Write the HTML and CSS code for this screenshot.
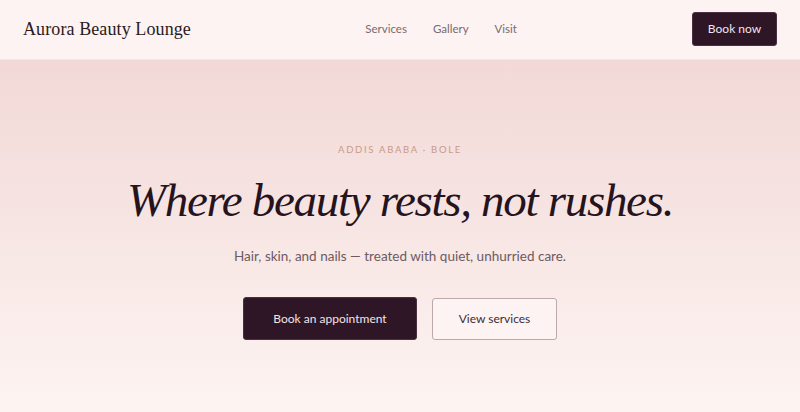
FILE: index.html
```html
<!DOCTYPE html>
<html lang="en">
<head>
<meta charset="utf-8">
<title>Aurora Beauty Lounge</title>
<link rel="stylesheet" href="styles.css">
</head>
<body>
<header class="site-header">
  <a class="logo" href="#">Aurora Beauty Lounge</a>
  <nav class="nav">
    <a href="#">Services</a>
    <a href="#">Gallery</a>
    <a href="#">Visit</a>
  </nav>
  <a class="btn btn-dark btn-small" href="#">Book now</a>
</header>
<main class="hero">
  <p class="eyebrow">Addis Ababa · Bole</p>
  <h1 class="title">Where beauty rests, not rushes.</h1>
  <p class="lead">Hair, skin, and nails — treated with quiet, unhurried care.</p>
  <div class="actions">
    <a class="btn btn-dark btn-large" href="#">Book an appointment</a>
    <a class="btn btn-outline btn-large" href="#">View services</a>
  </div>
</main>
</body>
</html>
```
FILE: styles.css
```css
* { box-sizing: border-box; }
html, body { margin: 0; padding: 0; }
body {
  font-family: "Lato", "Open Sans", sans-serif;
  background: #fcf3f2;
  color: #2e1626;
  height: 412px;
  overflow: hidden;
}
a { text-decoration: none; color: inherit; }

.site-header {
  height: 60px;
  display: flex;
  align-items: center;
  padding: 0 23px;
  background: #fdf3f2;
  border-bottom: 1px solid #f6e6e4;
}
.logo {
  font-family: "Liberation Serif", serif;
  font-size: 18px;
  color: #2a1a20;
  letter-spacing: 0.1px;
  flex: 1;
}
.nav {
  display: flex;
  gap: 26px;
  margin-right: 175px;
  padding-bottom: 2px;
}
.nav a {
  font-size: 11.5px;
  color: #7a6a70;
}

.btn {
  display: inline-flex;
  align-items: center;
  justify-content: center;
  border-radius: 3px;
  font-size: 12px;
}
.btn-dark {
  background: #2e1626;
  color: #f3e4ea;
  border: 1px solid #4a3040;
}
.btn-small {
  width: 85px;
  height: 34px;
  margin-top: -2px;
}
.btn-large {
  height: 43px;
  font-size: 12px;
}
.btn-dark.btn-large { width: 174px; }
.btn-outline {
  width: 125px;
  height: 42px;
  border: 1px solid #bca9ad;
  color: #3e2c34;
  background: #fcf3f2;
}

.hero {
  height: 352px;
  background: linear-gradient(180deg, #f2d9d7 0%, #f7e6e4 50%, #fdf4f2 100%);
  display: flex;
  flex-direction: column;
  align-items: center;
  padding-top: 84px;
}
.eyebrow {
  margin: 0;
  font-size: 9.5px;
  letter-spacing: 1.7px;
  text-transform: uppercase;
  color: #c99a86;
}
.title {
  margin: 17px 0 0;
  font-family: "Liberation Serif", serif;
  font-style: italic;
  font-weight: normal;
  font-size: 47px;
  line-height: 56px;
  color: #25131d;
  letter-spacing: -1.3px;
}
.lead {
  margin: 20px 0 0;
  font-size: 13.5px;
  color: #6e5a62;
}
.actions {
  display: flex;
  gap: 15px;
  margin-top: 33px;
  align-items: center;
}
```
